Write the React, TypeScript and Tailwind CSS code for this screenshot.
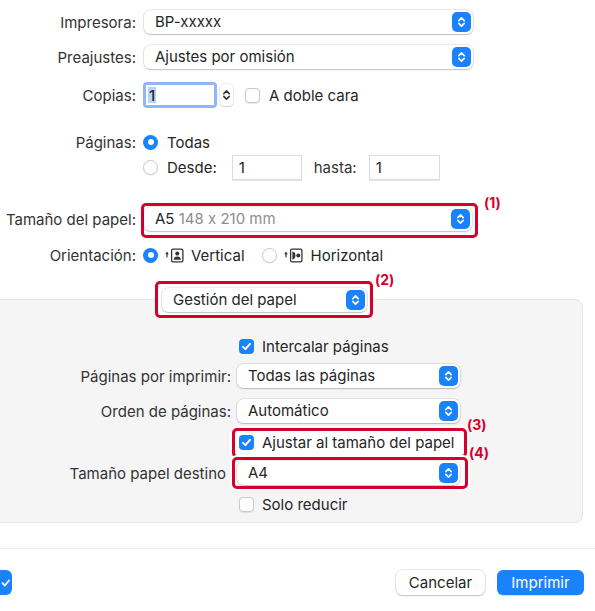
import React from "react";

const RED = "border-[#d5002c]";

function Chevrons({ color = "white" }: { color?: string }) {
  return (
    <svg width="9" height="14" viewBox="0 0 9 14" fill="none">
      <path d="M1.8 5.6 L4.5 2.9 L7.2 5.6" stroke={color} strokeWidth="1.6" strokeLinecap="round" strokeLinejoin="round" />
      <path d="M1.8 8.4 L4.5 11.1 L7.2 8.4" stroke={color} strokeWidth="1.6" strokeLinecap="round" strokeLinejoin="round" />
    </svg>
  );
}

function Popup({ w, children }: { w: string; children: React.ReactNode }) {
  return (
    <div
      className={`${w} h-[24px] flex items-center justify-between bg-white rounded-[6px] shadow-[0_0_0_0.5px_rgba(0,0,0,0.16),0_1px_1.5px_rgba(0,0,0,0.18)] pl-[11px] pr-[2px] relative z-10`}
    >
      <span className="whitespace-nowrap leading-[18px]">{children}</span>
      <div className="w-[19px] h-[20px] rounded-[5px] bg-[#1a82fb] flex items-center justify-center shrink-0">
        <Chevrons />
      </div>
    </div>
  );
}

function Radio({ on }: { on?: boolean }) {
  return on ? (
    <div className="w-[15px] h-[15px] rounded-full bg-[#1a82fb] flex items-center justify-center shrink-0">
      <div className="w-[6px] h-[6px] rounded-full bg-white" />
    </div>
  ) : (
    <div className="w-[15px] h-[15px] rounded-full bg-white border border-[#c9c9c9] shadow-[0_0.5px_1px_rgba(0,0,0,0.08)] shrink-0" />
  );
}

function Check({ on }: { on?: boolean }) {
  return on ? (
    <div className="w-[15px] h-[15px] rounded-[4px] bg-[#1a82fb] flex items-center justify-center shrink-0">
      <svg width="11" height="11" viewBox="0 0 11 11" fill="none">
        <path d="M2 5.8 L4.4 8.2 L9 2.8" stroke="white" strokeWidth="1.9" strokeLinecap="round" strokeLinejoin="round" />
      </svg>
    </div>
  ) : (
    <div className="w-[15px] h-[15px] rounded-[4px] bg-white border border-[#c9c9c9] shadow-[0_0.5px_1px_rgba(0,0,0,0.08)] shrink-0" />
  );
}

function Field({ w, children }: { w: string; children: React.ReactNode }) {
  return (
    <div className={`${w} h-[25px] flex items-center bg-white border border-[#dcdcdc] shadow-[0_0.5px_0.5px_rgba(0,0,0,0.1)] pl-[6px]`}>
      {children}
    </div>
  );
}

function Tag({ children, className }: { children: React.ReactNode; className: string }) {
  return (
    <span className={`absolute text-[14px] font-bold text-[#d5002c] leading-none ${className}`}>{children}</span>
  );
}

function PortraitIcon() {
  return (
    <svg width="21" height="15" viewBox="0 0 21 15" fill="none">
      <path d="M1.2 6.2 L3 3.6 L4.8 6.2 Z" fill="#333" />
      <rect x="2.4" y="5.8" width="1.2" height="3.5" fill="#333" />
      <rect x="7.6" y="1.1" width="11.3" height="12.8" rx="1.3" stroke="#333" strokeWidth="1.3" />
      <circle cx="13.25" cy="5.6" r="2" fill="#333" />
      <path d="M9.6 11.8 C9.8 9.2 11.3 8.4 13.25 8.4 C15.2 8.4 16.7 9.2 16.9 11.8 Z" fill="#333" />
    </svg>
  );
}

function LandscapeIcon() {
  return (
    <svg width="21" height="15" viewBox="0 0 21 15" fill="none">
      <path d="M1.2 6.2 L3 3.6 L4.8 6.2 Z" fill="#333" />
      <rect x="2.4" y="5.8" width="1.2" height="3.5" fill="#333" />
      <rect x="7.6" y="1.1" width="11.3" height="12.8" rx="1.3" stroke="#333" strokeWidth="1.3" />
      <path d="M9.4 3.6 C11.8 3.8 12.4 5.4 12.4 7.5 C12.4 9.6 11.8 11.2 9.4 11.4 Z" fill="#333" />
      <circle cx="15.3" cy="7.5" r="2" fill="#333" />
    </svg>
  );
}

export default function App() {
  return (
    <div
      className="w-[595px] h-[611px] bg-white relative overflow-hidden text-[15px] text-[#262626] leading-none [font-feature-settings:'calt'_0]"
      style={{ fontFamily: "Inter, 'Noto Sans', sans-serif" }}
    >
      {/* Top section */}
      <div className="pt-[10px]">
        <div className="flex items-center h-[24px]">
          <div className="w-[136px] text-right text-[#333] whitespace-nowrap">Impresora:</div>
          <div className="ml-[8px]">
            <Popup w="w-[329px]">BP-xxxxx</Popup>
          </div>
        </div>

        <div className="flex items-center h-[24px] mt-[11px]">
          <div className="w-[136px] text-right text-[#333] whitespace-nowrap">Preajustes:</div>
          <div className="ml-[8px]">
            <Popup w="w-[329px]">Ajustes por omisión</Popup>
          </div>
        </div>

        <div className="flex items-center h-[26px] mt-[13px]">
          <div className="w-[136px] text-right text-[#333] whitespace-nowrap">Copias:</div>
          <div className="ml-[7px] w-[74px] h-[26px] rounded-[4px] bg-[#8fb7f5] p-[3px]">
            <div className="w-full h-full bg-white flex items-center pl-[2px]">
              <span className="bg-[#b5d3fb] px-[1px] h-[16px] flex items-center font-medium">1</span>
            </div>
          </div>
          <div className="ml-[3px] w-[13px] h-[22px] rounded-[4px] bg-white shadow-[0_0_0_0.5px_rgba(0,0,0,0.14),0_1px_1px_rgba(0,0,0,0.12)] flex items-center justify-center">
            <Chevrons color="#333" />
          </div>
          <div className="ml-[12px]">
            <Check />
          </div>
          <span className="ml-[9px] whitespace-nowrap">A doble cara</span>
        </div>

        <div className="flex items-center h-[20px] mt-[24px]">
          <div className="w-[136px] text-right text-[#333]">Páginas:</div>
          <div className="ml-[7px]">
            <Radio on />
          </div>
          <span className="ml-[9px]">Todas</span>
        </div>

        <div className="flex items-center h-[25px] mt-[3px]">
          <div className="ml-[143px]">
            <Radio />
          </div>
          <span className="ml-[9px]">Desde:</span>
          <div className="ml-[15px]">
            <Field w="w-[70px]">1</Field>
          </div>
          <span className="ml-[12px] text-[#333]">hasta:</span>
          <div className="ml-[12px]">
            <Field w="w-[71px]">1</Field>
          </div>
        </div>

        <div className="flex items-center h-[24px] mt-[27px]">
          <div className="w-[136px] text-right text-[#333] whitespace-nowrap">Tamaño del papel:</div>
          <div className="ml-[8px] relative">
            <div className={`absolute -left-[3px] -right-[6px] -top-[4px] -bottom-[7px] border-[3px] ${RED} rounded-[5px] bg-white shadow-[0_0_0_2px_white]`} />
            <Popup w="w-[328px]">
              <span className="text-[#262626]">A5</span>
              <span className="text-[#8e8e8e]"> 148 x 210 mm</span>
            </Popup>
            <Tag className="left-[340px] -top-[11px]">(1)</Tag>
          </div>
        </div>

        <div className="flex items-center h-[20px] mt-[14px]">
          <div className="w-[136px] text-right text-[#333]">Orientación:</div>
          <div className="ml-[7px]">
            <Radio on />
          </div>
          <div className="ml-[6px]">
            <PortraitIcon />
          </div>
          <span className="ml-[6px]">Vertical</span>
          <div className="ml-[17px]">
            <Radio />
          </div>
          <div className="ml-[6px]">
            <LandscapeIcon />
          </div>
          <span className="ml-[7px]">Horizontal</span>
        </div>

        <div className="flex items-center h-[25px] mt-[22px] relative z-20">
          <div className="ml-[162px] relative">
            <div className={`absolute -left-[7px] -right-[6px] -top-[7px] -bottom-[6px] border-[3px] ${RED} rounded-[5px] bg-white`} />
            <Popup w="w-[205px]">Gestión del papel</Popup>
            <Tag className="left-[213px] -top-[15px]">(2)</Tag>
          </div>
        </div>
      </div>

      {/* Panel */}
      <div className="-mt-[13px] -ml-[10px] w-[593px] h-[224px] bg-[#f5f5f5] border border-[#e6e6e6] rounded-[8px] pt-[36px] relative z-10">
        <div className="flex items-center h-[20px]">
          <div className="ml-[248px]">
            <Check on />
          </div>
          <span className="ml-[8px]">Intercalar páginas</span>
        </div>

        <div className="flex items-center h-[24px] mt-[8px]">
          <div className="w-[240px] text-right text-[#333] whitespace-nowrap">Páginas por imprimir:</div>
          <div className="ml-[6px]">
            <Popup w="w-[223px]">Todas las páginas</Popup>
          </div>
        </div>

        <div className="flex items-center h-[24px] mt-[11px]">
          <div className="w-[240px] text-right text-[#333] whitespace-nowrap">Orden de páginas:</div>
          <div className="ml-[6px]">
            <Popup w="w-[223px]">Automático</Popup>
          </div>
        </div>

        <div className="flex items-center h-[20px] mt-[9px] relative">
          <div className={`absolute left-[241px] w-[235px] -top-[4px] h-[30px] border-[3px] ${RED} rounded-[5px] bg-white shadow-[0_0_0_2px_white]`} />
          <div className="ml-[248px] relative">
            <Check on />
          </div>
          <span className="ml-[8px] relative whitespace-nowrap">Ajustar al tamaño del papel</span>
          <Tag className="left-[476px] -top-[14px]">(3)</Tag>
        </div>

        <div className="flex items-center h-[24px] mt-[9px] relative">
          <div className={`absolute left-[241px] w-[236px] -top-[4px] h-[32px] border-[3px] ${RED} rounded-[5px] bg-white shadow-[0_0_0_2px_white]`} />
          <div className="w-[235px] text-right text-[#333] relative whitespace-nowrap">Tamaño papel destino</div>
          <div className="ml-[11px] relative">
            <Popup w="w-[223px]">A4</Popup>
          </div>
          <Tag className="left-[478px] -top-[15px]">(4)</Tag>
        </div>

        <div className="flex items-center h-[20px] mt-[9px]">
          <div className="ml-[248px]">
            <Check />
          </div>
          <span className="ml-[8px]">Solo reducir</span>
        </div>
      </div>

      {/* Separator */}
      <div className="mt-[25px] h-px bg-[#ececec]" />

      {/* Bottom buttons */}
      <div className="mt-[21px] flex items-center h-[25px]">
        <div className="-ml-[12px] w-[24px] h-[25px] rounded-[6px] bg-[#1a82fb] flex items-center justify-end pr-[1px]">
          <svg width="10" height="10" viewBox="0 0 10 10" fill="none">
            <path d="M1.5 5.2 L3.8 7.5 L8 2.5" stroke="white" strokeWidth="1.8" strokeLinecap="round" strokeLinejoin="round" />
          </svg>
        </div>
        <div className="ml-auto w-[89px] h-[25px] rounded-[6px] bg-white shadow-[0_0_0_0.5px_rgba(0,0,0,0.16),0_1px_1.5px_rgba(0,0,0,0.18)] flex items-center justify-center">
          Cancelar
        </div>
        <div className="ml-[12px] mr-[11px] w-[87px] h-[25px] rounded-[6px] bg-[#1a82fb] text-white flex items-center justify-center shadow-[0_1px_1px_rgba(0,0,0,0.15)]">
          Imprimir
        </div>
      </div>
    </div>
  );
}
